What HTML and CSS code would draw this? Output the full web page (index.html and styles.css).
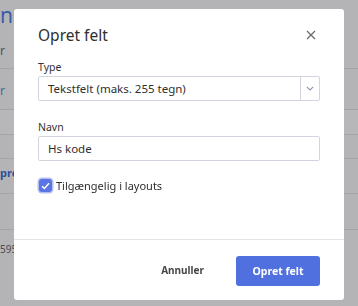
FILE: index.html
```html
<!DOCTYPE html>
<html lang="da">
<head>
<meta charset="utf-8">
<title>Opret felt</title>
<link rel="stylesheet" href="styles.css">
</head>
<body>
<div class="page">
  <div class="row row-head">
    <div class="h-big">ng</div>
    <div class="h-small">r</div>
  </div>
  <div class="row row-a"><span class="link">r</span></div>
  <div class="row row-b"></div>
  <div class="row row-c"></div>
  <div class="row row-d"><span class="link strong">pre</span></div>
  <div class="row row-e"></div>
  <div class="row row-f"><span class="num">595</span></div>
</div>

<div class="overlay">
  <div class="modal" role="dialog" aria-labelledby="mt">
    <div class="modal-body">
      <div class="modal-head">
        <h2 id="mt" class="title">Opret felt</h2>
        <button class="close" aria-label="Luk">
          <svg width="10" height="10" viewBox="0 0 10 10"><path d="M1 1L9 9M9 1L1 9" stroke="#6b6b6b" stroke-width="1.3" fill="none"/></svg>
        </button>
      </div>
      <div class="field">
        <label class="label">Type</label>
        <div class="select">
          <span class="select-value">Tekstfelt (maks. 255 tegn)</span>
          <span class="select-arrow">
            <svg width="8" height="5" viewBox="0 0 8 5"><path d="M0.8 0.8L4 4L7.2 0.8" stroke="#8d95ad" stroke-width="1.1" fill="none"/></svg>
          </span>
        </div>
      </div>
      <div class="field">
        <label class="label">Navn</label>
        <div class="input">Hs kode</div>
      </div>
      <div class="check-row">
        <span class="checkbox">
          <svg width="9" height="8" viewBox="0 0 9 8"><path d="M1 4.2L3.4 6.4L8 1.2" stroke="#fff" stroke-width="1.5" fill="none"/></svg>
        </span>
        <span class="check-label">Tilgængelig i layouts</span>
      </div>
    </div>
    <div class="modal-foot">
      <button class="btn-cancel">Annuller</button>
      <button class="btn-primary">Opret felt</button>
    </div>
  </div>
</div>
</body>
</html>
```
FILE: styles.css
```css
html, body {
  margin: 0;
  padding: 0;
}
body {
  width: 358px;
  height: 306px;
  overflow: hidden;
  background: #b4b4b6;
  font-family: "Noto Sans", "Open Sans", sans-serif;
  color: #333;
}
.page {
  display: flex;
  flex-direction: column;
}
.row {
  border-bottom: 1px solid #a4a4a7;
  box-sizing: border-box;
  overflow: hidden;
  white-space: nowrap;
}
.row-head {
  height: 69px;
}
.h-big {
  font-size: 21px;
  color: #3c5aa8;
  line-height: 22px;
  margin-top: 4px;
}
.h-small {
  font-size: 12px;
  color: #505052;
  margin-top: 16px;
}
.row-a {
  height: 41px;
  padding-top: 13px;
  font-size: 12px;
}
.link {
  color: #3f6aa8;
}
.strong {
  font-weight: 700;
  color: #2f4f99;
}
.row-b {
  height: 25px;
  background: #b7b7b9;
}
.row-c {
  height: 24px;
}
.row-d {
  height: 35px;
  padding-top: 6px;
  font-size: 11px;
}
.row-e {
  height: 36px;
}
.row-f {
  border-bottom: none;
  padding-top: 12px;
  font-size: 10px;
  color: #4a4a4c;
}

.overlay {
  position: fixed;
  inset: 0;
}
.modal {
  position: absolute;
  left: 14px;
  top: 9px;
  width: 330px;
  height: 291px;
  background: #fff;
  border-radius: 3px;
  display: flex;
  flex-direction: column;
}
.modal-body {
  flex: 1;
  padding: 14px 24px 0 24px;
}
.modal-head {
  display: flex;
  justify-content: space-between;
  align-items: center;
  height: 24px;
  margin-bottom: 12px;
}
.title {
  margin: 0;
  font-size: 15.5px;
  font-weight: 400;
  color: #2f2f2f;
  line-height: 24px;
}
.close {
  border: 0;
  background: none;
  padding: 0;
  width: 10px;
  height: 10px;
  margin-right: 4px;
  display: flex;
}
.field {
  display: flex;
  flex-direction: column;
  margin-bottom: 18px;
}
.label {
  font-size: 10.5px;
  line-height: 16px;
  color: #333;
  margin-bottom: 1px;
}
.select, .input {
  height: 25px;
  box-sizing: border-box;
  border: 1px solid #d3d5de;
  border-radius: 2px;
  display: flex;
  align-items: center;
  font-size: 11.5px;
  color: #2f2f2f;
}
.select-value {
  flex: 1;
  padding-left: 9px;
}
.select-arrow {
  width: 18px;
  height: 100%;
  border-left: 1px solid #d3d5de;
  display: flex;
  align-items: center;
  justify-content: center;
}
.input {
  padding-left: 9px;
}
.check-row {
  display: flex;
  align-items: center;
  margin-top: -1px;
}
.checkbox {
  width: 13px;
  height: 13px;
  border-radius: 3px;
  background: #5a74e4;
  box-shadow: 0 0 0 1.5px #b5c0f0;
  display: flex;
  align-items: center;
  justify-content: center;
  margin-left: 1px;
  margin-right: 4px;
}
.check-label {
  font-size: 11px;
  color: #2f2f2f;
}
.modal-foot {
  border-top: 1px solid #e3e3e6;
  height: 61px;
  box-sizing: border-box;
  display: flex;
  align-items: center;
  justify-content: flex-end;
  padding: 0 24px 0 0;
  gap: 32px;
}
.btn-cancel {
  border: 0;
  background: none;
  font-family: inherit;
  font-size: 10px;
  font-weight: 700;
  color: #464646;
  padding: 0;
}
.btn-primary {
  border: 0;
  width: 84px;
  height: 30px;
  border-radius: 3px;
  background: #5170df;
  color: #fff;
  font-family: inherit;
  font-size: 10.5px;
  font-weight: 700;
  margin-top: 2px;
}
```
